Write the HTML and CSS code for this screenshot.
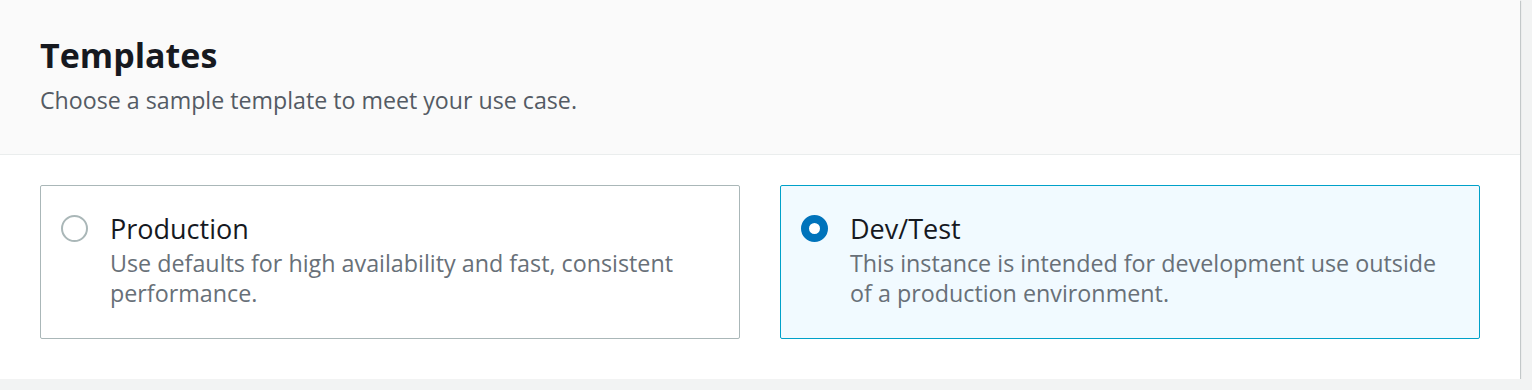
FILE: index.html
```html
<!DOCTYPE html>
<html lang="en">
<head>
  <meta charset="UTF-8" />
  <meta name="viewport" content="width=device-width, initial-scale=1.0" />
  <title>Templates</title>
  <link rel="stylesheet" href="styles.css">
</head>
<body>
  <div class="panel">
    <div class="panel-header">
      <h2>Templates</h2>
      <p class="panel-desc">Choose a sample template to meet your use case.</p>
    </div>

    <!-- Template tiles -->
    <div class="tiles">
      <label class="tile">
        <span class="radio"></span>
        <span class="tile-text">
          <span class="tile-title">Production</span>
          <span class="tile-desc">Use defaults for high availability and fast, consistent performance.</span>
        </span>
      </label>
      <label class="tile selected">
        <span class="radio"></span>
        <span class="tile-text">
          <span class="tile-title">Dev/Test</span>
          <span class="tile-desc">This instance is intended for development use outside of a production environment.</span>
        </span>
      </label>
    </div>
  </div>
</body>
</html>
```

FILE: styles.css
```css
body {
  font-family: 'Open Sans', 'Noto Sans', sans-serif;
  margin: 0;
  padding: 0;
  background-color: #f2f3f3;
  color: #16191f;
}
.panel {
  width: 1520px;
  height: 379px;
  background-color: #fff;
  box-shadow: 0 1px 1px 0 rgba(0, 28, 36, 0.3), 1px 1px 1px 0 rgba(0, 28, 36, 0.15);
}
.panel-header {
  height: 155px;
  box-sizing: border-box;
  padding: 34px 40px 0;
  background-color: #fafafa;
  border-bottom: 1px solid #eaeded;
}
.panel-header h2 {
  margin: 0;
  font-size: 34px;
  font-weight: 700;
  line-height: 42px;
}
.panel-desc {
  margin: 9px 0 0;
  font-size: 23.2px;
  line-height: 30px;
  color: #545b64;
}
.tiles {
  display: grid;
  grid-template-columns: 1fr 1fr;
  gap: 40px;
  padding: 30px 40px 0;
}
.tile {
  display: flex;
  gap: 22px;
  height: 154px;
  box-sizing: border-box;
  padding: 27px 30px 0 20px;
  border: 1px solid #aab7b8;
  border-radius: 2px;
}
.tile.selected {
  border-color: #00a1c9;
  background-color: #f1faff;
}
.radio {
  flex: none;
  width: 27px;
  height: 27px;
  box-sizing: border-box;
  margin-top: 2px;
  border: 2px solid #aab7b8;
  border-radius: 50%;
  background-color: #fff;
}
.selected .radio {
  border: 8px solid #0073bb;
}
.tile-text {
  display: flex;
  flex-direction: column;
}
.tile-title {
  font-size: 27px;
  line-height: 32px;
}
.tile-desc {
  margin-top: 3px;
  font-size: 23.3px;
  line-height: 30px;
  color: #687078;
}
```
